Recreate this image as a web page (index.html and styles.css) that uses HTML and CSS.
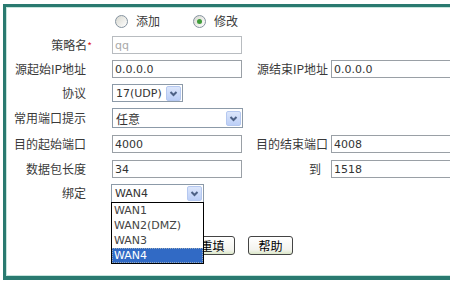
FILE: index.html
```html
<!DOCTYPE html>
<html lang="zh-CN">
<head>
    <meta charset="UTF-8">
    <title>策略设置</title>
    <link rel="stylesheet" href="styles.css">
</head>
<body>
    <div class="frame">
        <form class="policy-form">
            <div class="mode-row">
                <span class="radio-item"><span class="radio"></span>添加</span>
                <span class="radio-item"><span class="radio checked"></span>修改</span>
            </div>

            <label class="lbl">策略名<span class="req">*</span></label>
            <div class="fld"><input class="txt txt-ro" value="qq"></div>
            <div></div><div></div>

            <label class="lbl">源起始IP地址</label>
            <div class="fld"><input class="txt" value="0.0.0.0"></div>
            <label class="lbl2">源结束IP地址</label>
            <div class="fld"><input class="txt" value="0.0.0.0"></div>

            <label class="lbl">协议</label>
            <div class="fld">
                <div class="select sel-proto">
                    <span class="sel-val">17(UDP)</span>
                    <span class="sel-btn"><svg width="11" height="11" viewBox="0 0 11 11"><path d="M2.5 4 L5.5 7 L8.5 4" fill="none" stroke="#4d6185" stroke-width="2"/></svg></span>
                </div>
            </div>
            <div></div><div></div>

            <label class="lbl">常用端口提示</label>
            <div class="fld">
                <div class="select sel-port">
                    <span class="sel-val cjk">任意</span>
                    <span class="sel-btn"><svg width="11" height="11" viewBox="0 0 11 11"><path d="M2.5 4 L5.5 7 L8.5 4" fill="none" stroke="#4d6185" stroke-width="2"/></svg></span>
                </div>
            </div>
            <div></div><div></div>

            <label class="lbl">目的起始端口</label>
            <div class="fld"><input class="txt" value="4000"></div>
            <label class="lbl2">目的结束端口</label>
            <div class="fld"><input class="txt" value="4008"></div>

            <label class="lbl">数据包长度</label>
            <div class="fld"><input class="txt" value="34"></div>
            <label class="lbl2 lbl-to">到</label>
            <div class="fld"><input class="txt" value="1518"></div>

            <label class="lbl">绑定</label>
            <div class="fld">
                <div class="select sel-wan">
                    <span class="sel-val">WAN4</span>
                    <span class="sel-btn"><svg width="11" height="11" viewBox="0 0 11 11"><path d="M2.5 4 L5.5 7 L8.5 4" fill="none" stroke="#4d6185" stroke-width="2"/></svg></span>
                    <ul class="sel-list">
                        <li>WAN1</li>
                        <li>WAN2(DMZ)</li>
                        <li>WAN3</li>
                        <li class="active">WAN4</li>
                    </ul>
                </div>
            </div>
            <div></div><div></div>

            <div class="btn-row">
                <button type="button" class="btn">重填</button>
                <button type="button" class="btn">帮助</button>
            </div>
        </form>
    </div>
</body>
</html>
```

FILE: styles.css
```css
html, body {
    margin: 0;
    overflow: hidden;
    background: #fff;
}

body {
    font-family: "Noto Sans CJK SC", sans-serif;
    font-size: 12px;
    color: #3a3a3a;
}

/* the right edge of the frame lies outside the window */
.frame {
    margin: 4px 0 0 3px;
    width: 447px;
    height: 276px;
    box-sizing: border-box;
    border: 3px solid #2a7a70;
    border-right: 0;
    border-bottom-width: 4px;
    box-shadow: inset 1px 1px 0 0 #c6e5dd, inset 0 -1px 0 0 #c6e5dd;
    background: #fff;
    overflow: hidden;
}

.policy-form {
    display: grid;
    grid-template-columns: 106px 144px 75px 140px;
    grid-template-rows: 24px 24px 24px 24px 26px 26px 24px 24px 52px;
    align-items: center;
    padding-top: 2px;
}

.mode-row {
    grid-column: 2 / 5;
    display: flex;
    align-items: center;
    padding-left: 3px;
    line-height: 14px;
}

.radio-item {
    display: flex;
    align-items: center;
    gap: 8px;
    margin-right: 33px;
}

.radio {
    width: 11px;
    height: 11px;
    border: 1px solid #8593a0;
    border-radius: 50%;
    background: linear-gradient(135deg, #d8d8d0, #fff);
    display: flex;
    align-items: center;
    justify-content: center;
}

.radio.checked::after {
    content: "";
    width: 5px;
    height: 5px;
    border-radius: 50%;
    background: #3f9c3a;
}

.lbl {
    text-align: right;
    padding-right: 26px;
    white-space: nowrap;
    line-height: 14px;
}

.lbl2 {
    text-align: right;
    padding-right: 3px;
    white-space: nowrap;
    line-height: 14px;
}

.lbl-to {
    padding-right: 10px;
}

.req {
    color: #e02020;
    font-size: 10px;
    margin-right: -6px;
}

.fld {
    display: flex;
    align-items: center;
}

.txt {
    width: 130px;
    height: 18px;
    box-sizing: border-box;
    border: 1px solid #9aa0a6;
    padding: 0 2px;
    margin: 0;
    font-family: "DejaVu Sans", sans-serif;
    font-size: 11px;
    color: #333;
    background: #fff;
    outline: none;
}

.txt-ro {
    color: #aaa;
    border-color: #b8bcc0;
}

.select {
    position: relative;
    height: 19px;
    box-sizing: border-box;
    border: 1px solid #8c9aa8;
    background: #fff;
    display: flex;
    align-items: center;
    justify-content: space-between;
    padding: 0 1px 0 3px;
    font-family: "DejaVu Sans", sans-serif;
    font-size: 11px;
    color: #333;
}

.sel-val.cjk {
    font-family: "Noto Sans CJK SC", sans-serif;
    font-size: 12px;
}

.sel-btn {
    width: 15px;
    height: 15px;
    box-sizing: border-box;
    border: 1px solid #b5c8f0;
    border-radius: 2px;
    background: linear-gradient(#dce6fb, #bccff7);
    display: flex;
    align-items: center;
    justify-content: center;
}

.sel-proto {
    width: 71px;
    height: 18px;
}

.sel-port {
    width: 131px;
    height: 20px;
}

.sel-wan {
    width: 93px;
    margin-left: -1px;
}

.sel-list {
    position: absolute;
    top: 100%;
    left: -1px;
    width: 93px;
    box-sizing: border-box;
    margin: 0;
    padding: 0;
    list-style: none;
    border: 1px solid #000;
    background: #fff;
    z-index: 2;
}

.sel-list li {
    height: 15px;
    line-height: 15px;
    padding-left: 2px;
    color: #444;
}

.sel-list li.active {
    background: #316ac5;
    color: #fff;
    outline: 1px dotted #9ab;
    outline-offset: -1px;
}

.btn-row {
    grid-column: 2 / 5;
    align-self: start;
    display: flex;
    gap: 13px;
    padding: 31px 0 0 78px;
}

.btn {
    width: 45px;
    height: 19px;
    padding: 0;
    border: 1px solid #444;
    border-radius: 3px;
    background: linear-gradient(#ffffff 0%, #f3f3ee 75%, #dbe8c8 100%);
    font-family: "Noto Sans CJK SC", sans-serif;
    font-size: 12px;
    line-height: 17px;
    color: #000;
}
```
